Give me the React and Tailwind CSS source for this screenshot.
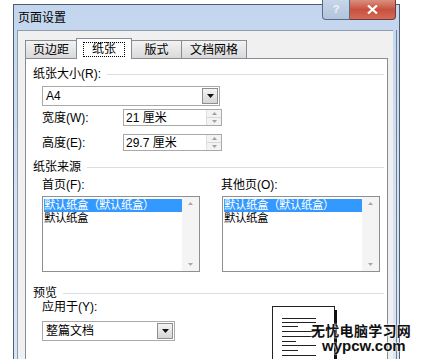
const Header = ({ label, className = '' }) => (
  <div className={`flex items-center h-[16px] ${className}`}>
    <span>{label}</span>
    <div className="flex-1 h-px bg-[#d5dfe5] ml-[6px] mr-[3px]" />
  </div>
);

const DropButton = ({ className = '' }) => (
  <div className={`w-[16px] h-[16px] border border-[#8f8f8f] bg-linear-to-b from-[#f4f4f4] to-[#d6d6d6] flex items-center justify-center ${className}`}>
    <svg width="7" height="4" viewBox="0 0 7 4"><path d="M0 0h7L3.5 4z" fill="#111" /></svg>
  </div>
);

const Spinner = () => (
  <div className="w-[15px] h-full flex flex-col border-l border-[#e0e0e0] bg-[#f3f3f3]">
    <div className="flex-1 flex items-center justify-center border-b border-[#d8d8d8]">
      <svg width="5" height="3" viewBox="0 0 5 3"><path d="M0 3h5L2.5 0z" fill="#9aa3ad" /></svg>
    </div>
    <div className="flex-1 flex items-center justify-center">
      <svg width="5" height="3" viewBox="0 0 5 3"><path d="M0 0h5L2.5 3z" fill="#9aa3ad" /></svg>
    </div>
  </div>
);

const ListBox = () => (
  <div className="w-[158px] h-[76px] border border-[#8c9096] bg-white flex mt-[3px]">
    <div className="flex-1 pl-[1px] pt-[2px] text-[11.5px] leading-[13px]">
      <div className="bg-[#3399ff] text-white h-[13px] tracking-[-0.5px]">默认纸盒（默认纸盒）</div>
      <div className="h-[13px] tracking-[-0.5px]">默认纸盒</div>
    </div>
    <div className="w-[17px] bg-[#f4f4f4] flex flex-col justify-between items-center py-[5px]">
      <svg width="5" height="3" viewBox="0 0 5 3"><path d="M0 3h5L2.5 0z" fill="#a8a8a8" /></svg>
      <svg width="5" height="3" viewBox="0 0 5 3"><path d="M0 0h5L2.5 3z" fill="#a8a8a8" /></svg>
    </div>
  </div>
);

const PagePreview = () => {
  const lines = [
    [12, 44], [16, 44], [20, 26], [25, 44], [30, 44], [35, 24], [39, 44], [44, 26], [49, 44], [54, 44],
  ];
  return (
    <svg width="66" height="60" viewBox="0 0 66 60" className="mt-[5px] block">
      <rect x="0.5" y="0.5" width="62" height="62" fill="#fff" stroke="#222" />
      <rect x="62" y="4" width="3" height="60" fill="#111" />
      {lines.map(([y, x2], i) => (
        <rect key={i} x="10" y={y} width={x2 - 10} height="1" fill="#222" />
      ))}
    </svg>
  );
};

export default function App() {
  return (
    <div className="w-[424px] h-[359px] bg-white overflow-hidden relative text-[12px] text-black font-['Liberation_Sans','Noto_Sans_CJK_SC',sans-serif]">
      {/* window frame */}
      <div className="ml-[13px] mt-[4px] w-[387px] h-[370px] border-l border-t border-r border-[#4f5d70] bg-linear-to-b from-[#c3d6ee] via-[#d3e1f2] to-[#dae6f4] flex flex-col">
        <div className="h-[25px] flex items-center pl-[4px] text-[12px] leading-none">页面设置</div>
        <div className="flex flex-1">
          <div className="ml-[3px] w-[376px] bg-[#f0f0f0] border-l border-t border-[#8e9bab] pt-[6px] flex flex-col">
            {/* tabs */}
            <div className="flex items-end pl-[7px] h-[21px] relative z-10">
              <div className="w-[52px] h-[18px] border border-b-0 border-[#898c95] bg-linear-to-b from-[#f3f3f3] to-[#d9d9d9] flex items-center justify-center leading-none">页边距</div>
              <div className="w-[56px] h-[21px] -ml-px border border-b-0 border-[#898c95] bg-white flex items-center justify-center -mb-px">
                <span className="border border-dotted border-black px-[8px] h-[15px] flex items-center leading-none">纸张</span>
              </div>
              <div className="w-[51px] h-[18px] -ml-px border border-b-0 border-[#898c95] bg-linear-to-b from-[#f3f3f3] to-[#d9d9d9] flex items-center justify-center leading-none">版式</div>
              <div className="w-[66px] h-[18px] -ml-px border border-b-0 border-[#898c95] bg-linear-to-b from-[#f3f3f3] to-[#d9d9d9] flex items-center justify-center leading-none">文档网格</div>
            </div>
            {/* panel */}
            <div className="ml-[7px] w-[363px] flex-1 border border-[#898c95] bg-white pl-[7px] pt-[7px] leading-[16px]">
              <Header label="纸张大小(R):" />
              <div className="ml-[9px] mt-[4px] w-[178px] h-[20px] border border-[#a9a9a9] flex items-center justify-between pl-[3px] pr-px">
                <span>A4</span>
                <DropButton />
              </div>
              <div className="ml-[9px] mt-[3px] flex items-center h-[17px]">
                <span className="w-[81px]">宽度(W):</span>
                <div className="w-[99px] h-[17px] border border-[#a9a9a9] flex justify-between items-center pl-[2px]">
                  <span>21 厘米</span>
                  <Spinner />
                </div>
              </div>
              <div className="ml-[9px] mt-[8px] flex items-center h-[17px]">
                <span className="w-[81px]">高度(E):</span>
                <div className="w-[99px] h-[17px] border border-[#a9a9a9] flex justify-between items-center pl-[2px]">
                  <span>29.7 厘米</span>
                  <Spinner />
                </div>
              </div>
              <Header label="纸张来源" className="mt-[8px]" />
              <div className="ml-[9px] mt-[2px] flex gap-[22px]">
                <div>
                  <div className="h-[16px]">首页(F):</div>
                  <ListBox />
                </div>
                <div>
                  <div className="h-[16px] -ml-px">其他页(O):</div>
                  <ListBox />
                </div>
              </div>
              <Header label="预览" className="mt-[13px] h-[13px]" />
              <div className="flex">
                <div className="ml-[9px] w-[230px]">
                  <div className="h-[13px] leading-[13px]">应用于(Y):</div>
                  <div className="mt-[7px] w-[133px] h-[20px] border border-[#a9a9a9] flex items-center justify-between pl-[3px] pr-px">
                    <span>整篇文档</span>
                    <DropButton />
                  </div>
                </div>
                <PagePreview />
              </div>
            </div>
          </div>
          <div className="w-[3px]" />
          <div className="w-px bg-[#6f7e92]" />
        </div>
      </div>

      {/* caption buttons */}
      <div className="absolute left-[322px] top-0 flex h-[20px]">
        <div className="w-[28px] h-full border border-t-0 border-[#5d6b80] rounded-bl-[4px] bg-linear-to-b from-[#c7d6e8] to-[#b2c4dc] flex items-center justify-center text-[11px] font-bold text-[#eef3f9] leading-none">?</div>
        <div className="w-[46px] h-full border border-t-0 border-l-0 border-[#6b3b3b] rounded-br-[4px] bg-linear-to-b from-[#d8907f] via-[#c9503f] to-[#d46a55] flex items-center justify-center">
          <svg width="11" height="9" viewBox="0 0 11 9">
            <path d="M1 0.5 L10 8.5 M10 0.5 L1 8.5" stroke="#fff" strokeWidth="2.2" />
          </svg>
        </div>
      </div>

      {/* site watermark */}
      <div className="absolute left-[311px] top-[322px] font-bold text-[#111] [text-shadow:0_0_2px_#fff,0_0_2px_#fff]">
        <div className="text-[14px] leading-[16px] tracking-[0.3px] font-['Noto_Sans_CJK_SC',sans-serif]">无忧电脑学习网</div>
        <div className="text-[15px] leading-[15px] pl-[11px] font-['Liberation_Sans',sans-serif]">wypcw.com</div>
      </div>
    </div>
  );
}
